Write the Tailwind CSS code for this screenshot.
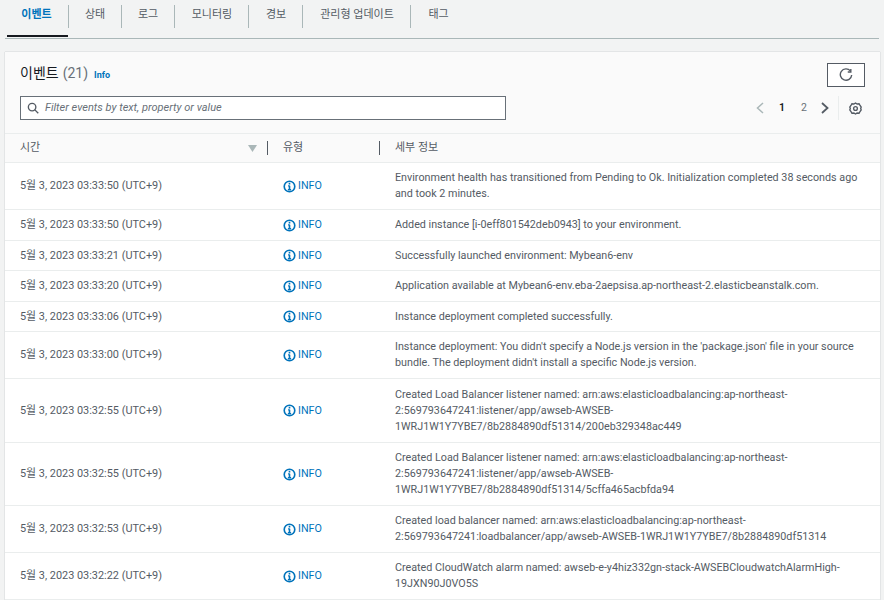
<!doctype html>
<html lang="ko">
<head>
<meta charset="utf-8">
<title>이벤트</title>
<script src="https://cdn.jsdelivr.net/npm/@tailwindcss/browser@4"></script>
</head>
<body class="h-[600px] w-[884px] overflow-hidden bg-[#f2f3f3] font-['Roboto','Noto_Sans_CJK_KR',sans-serif] text-[10.75px] leading-4 text-[#16191f]">
  <!-- Tabs -->
  <div class="mx-[5px] flex h-[39px] items-start border-b border-[#aab7b8] pt-[5px] text-[11px]">
    <div class="relative flex h-[23px] w-[63px] items-start justify-center pt-[2px] font-semibold text-[#0073bb]">
      이벤트
      <span class="absolute top-[30px] left-[2px] h-[2px] w-[61px] bg-[#16191f]"></span>
    </div>
    <div class="flex h-[23px] w-[53px] justify-center border-l border-[#aab7b8] pt-[2px] text-[#545b64]">상태</div>
    <div class="flex h-[23px] w-[53px] justify-center border-l border-[#aab7b8] pt-[2px] text-[#545b64]">로그</div>
    <div class="flex h-[23px] w-[74px] justify-center border-l border-[#aab7b8] pt-[2px] pl-px text-[#545b64]">모니터링</div>
    <div class="flex h-[23px] w-[54px] justify-center border-l border-[#aab7b8] pt-[2px] pl-px text-[#545b64]">경보</div>
    <div class="flex h-[23px] w-[108px] justify-center border-l border-[#aab7b8] pt-[2px] pl-px text-[#545b64]">관리형 업데이트</div>
    <div class="flex h-[23px] w-[56px] justify-center border-l border-[#aab7b8] pt-[2px] text-[#545b64]">태그</div>
  </div>

  <!-- Events card -->
  <div class="mt-[13px] ml-[5px] w-[875px] bg-white shadow-[0_0_1px_rgba(0,28,36,0.35)]">
    <div class="h-[82px] border-b border-[#eaeded] bg-[#fafafa] pt-[11px] pr-[15px] pl-[15px]">
      <div class="flex h-[24px] items-start justify-between">
        <div class="flex items-baseline">
          <span class="text-[14px] leading-5">이벤트</span>
          <span class="ml-[4px] text-[14px] leading-5 text-[#687078]">(21)</span>
          <span class="ml-[6px] text-[9px] font-bold text-[#0073bb]">Info</span>
        </div>
        <button class="flex h-[24px] w-[38px] items-center justify-center border border-[#545b64] bg-white">
          <svg class="h-[14px] w-[14px]" viewBox="0 0 16 16" fill="none" stroke="#545b64" stroke-width="1.6">
            <path d="M13 3.300A6.500 6.500 0 1 0 14.500 8"/>
            <path d="M13.500 1v3.500H10"/>
          </svg>
        </button>
      </div>
      <div class="mt-[9px] flex h-[24px] items-center justify-between">
        <div class="flex h-[24px] w-[486px] items-center border border-[#687078] bg-white pl-[6px]">
          <svg class="h-[12px] w-[12px] shrink-0" viewBox="0 0 16 16" fill="none" stroke="#545b64" stroke-width="1.8">
            <circle cx="6.800" cy="6.800" r="5"/>
            <path d="M10.500 10.500 15 15"/>
          </svg>
          <span class="ml-[6px] text-[11px] text-[#687078] italic">Filter events by text, property or value</span>
        </div>
        <div class="mr-[3px] flex h-[24px] items-center">
          <svg class="h-[12px] w-[8px]" viewBox="0 0 8 12" fill="none" stroke="#aab7b8" stroke-width="1.5"><path d="M7 1 1.500 6 7 11"/></svg>
          <span class="ml-[15px] w-[6px] text-[10.5px] font-semibold">1</span>
          <span class="ml-[16px] w-[8px] text-[10.5px] text-[#687078]">2</span>
          <svg class="ml-[12px] h-[12px] w-[8px]" viewBox="0 0 8 12" fill="none" stroke="#545b64" stroke-width="1.8"><path d="M1 1 6.500 6 1 11"/></svg>
          <span class="mr-[10px] ml-[9px] h-[24px] border-l border-[#eaeded]"></span>
          <svg class="h-[13px] w-[13px]" viewBox="0 0 16 16" fill="none" stroke="#545b64" stroke-width="1.7">
            <path d="M8 1.200 10 2.500l2.400-.3 1.200 2.100 1.400 1.900-.6 1.800.6 1.800-1.400 1.900-1.200 2.100-2.400-.3L8 14.800l-2-1.300-2.400.3-1.200-2.100L1 9.800l.6-1.800L1 6.200l1.400-1.900 1.200-2.100 2.400.3z"/>
            <circle cx="8" cy="8" r="2.300"/>
          </svg>
        </div>
      </div>
    </div>

    <!-- Column header -->
    <div class="grid h-[29px] grid-cols-[263px_112px_1fr] items-center border-b border-[#eaeded] bg-[#fafafa] text-[11px] text-[#545b64]">
      <div class="flex h-full items-center justify-between pl-[15px]">
        <span>시간</span>
        <span class="flex items-center">
          <svg class="h-[7px] w-[9px]" viewBox="0 0 9 7"><path d="M0 0h9L4.500 7z" fill="#aab7b8"/></svg>
          <span class="ml-[10px] h-[14px] border-l border-[#545b64]"></span>
        </span>
      </div>
      <div class="flex h-full items-center justify-between pl-[15px]">
        <span>유형</span>
        <span class="h-[14px] border-l border-[#545b64]"></span>
      </div>
      <div class="pl-[15px]">세부 정보</div>
    </div>

    <!-- Rows -->
    <div class="grid h-[47px] grid-cols-[263px_112px_1fr] items-center border-b border-[#eaeded]">
      <div class="pl-[15px] text-[10.9px] text-[#545b64]">5월 3, 2023 03:33:50 (UTC+9)</div>
      <div class="flex items-center pl-[15px] text-[#0073bb]"><svg class="mr-[2px] h-[13px] w-[13px]" viewBox="0 0 16 16" fill="none" stroke="#0073bb" stroke-width="2"><circle cx="8" cy="8" r="6.500"/><path d="M8 7v5M6 12h4M6.500 7.300H8M8 3.500v2"/></svg>INFO</div>
      <div class="pr-[15px] pl-[15px] text-[#545b64]">Environment health has transitioned from Pending to Ok. Initialization completed 38 seconds ago and took 2 minutes.</div>
    </div>
    <div class="grid h-[31px] grid-cols-[263px_112px_1fr] items-center border-b border-[#eaeded]">
      <div class="pl-[15px] text-[10.9px] text-[#545b64]">5월 3, 2023 03:33:50 (UTC+9)</div>
      <div class="flex items-center pl-[15px] text-[#0073bb]"><svg class="mr-[2px] h-[13px] w-[13px]" viewBox="0 0 16 16" fill="none" stroke="#0073bb" stroke-width="2"><circle cx="8" cy="8" r="6.500"/><path d="M8 7v5M6 12h4M6.500 7.300H8M8 3.500v2"/></svg>INFO</div>
      <div class="pr-[15px] pl-[15px] text-[#545b64]">Added instance [i-0eff801542deb0943] to your environment.</div>
    </div>
    <div class="grid h-[30px] grid-cols-[263px_112px_1fr] items-center border-b border-[#eaeded]">
      <div class="pl-[15px] text-[10.9px] text-[#545b64]">5월 3, 2023 03:33:21 (UTC+9)</div>
      <div class="flex items-center pl-[15px] text-[#0073bb]"><svg class="mr-[2px] h-[13px] w-[13px]" viewBox="0 0 16 16" fill="none" stroke="#0073bb" stroke-width="2"><circle cx="8" cy="8" r="6.500"/><path d="M8 7v5M6 12h4M6.500 7.300H8M8 3.500v2"/></svg>INFO</div>
      <div class="pr-[15px] pl-[15px] text-[#545b64]">Successfully launched environment: Mybean6-env</div>
    </div>
    <div class="grid h-[31px] grid-cols-[263px_112px_1fr] items-center border-b border-[#eaeded]">
      <div class="pl-[15px] text-[10.9px] text-[#545b64]">5월 3, 2023 03:33:20 (UTC+9)</div>
      <div class="flex items-center pl-[15px] text-[#0073bb]"><svg class="mr-[2px] h-[13px] w-[13px]" viewBox="0 0 16 16" fill="none" stroke="#0073bb" stroke-width="2"><circle cx="8" cy="8" r="6.500"/><path d="M8 7v5M6 12h4M6.500 7.300H8M8 3.500v2"/></svg>INFO</div>
      <div class="pr-[15px] pl-[15px] text-[#545b64]">Application available at Mybean6-env.eba-2aepsisa.ap-northeast-2.elasticbeanstalk.com.</div>
    </div>
    <div class="grid h-[30px] grid-cols-[263px_112px_1fr] items-center border-b border-[#eaeded]">
      <div class="pl-[15px] text-[10.9px] text-[#545b64]">5월 3, 2023 03:33:06 (UTC+9)</div>
      <div class="flex items-center pl-[15px] text-[#0073bb]"><svg class="mr-[2px] h-[13px] w-[13px]" viewBox="0 0 16 16" fill="none" stroke="#0073bb" stroke-width="2"><circle cx="8" cy="8" r="6.500"/><path d="M8 7v5M6 12h4M6.500 7.300H8M8 3.500v2"/></svg>INFO</div>
      <div class="pr-[15px] pl-[15px] text-[#545b64]">Instance deployment completed successfully.</div>
    </div>
    <div class="grid h-[47px] grid-cols-[263px_112px_1fr] items-center border-b border-[#eaeded]">
      <div class="pl-[15px] text-[10.9px] text-[#545b64]">5월 3, 2023 03:33:00 (UTC+9)</div>
      <div class="flex items-center pl-[15px] text-[#0073bb]"><svg class="mr-[2px] h-[13px] w-[13px]" viewBox="0 0 16 16" fill="none" stroke="#0073bb" stroke-width="2"><circle cx="8" cy="8" r="6.500"/><path d="M8 7v5M6 12h4M6.500 7.300H8M8 3.500v2"/></svg>INFO</div>
      <div class="pr-[15px] pl-[15px] text-[#545b64]">Instance deployment: You didn't specify a Node.js version in the 'package.json' file in your source bundle. The deployment didn't install a specific Node.js version.</div>
    </div>
    <div class="grid h-[64px] grid-cols-[263px_112px_1fr] items-center border-b border-[#eaeded]">
      <div class="pl-[15px] text-[10.9px] text-[#545b64]">5월 3, 2023 03:32:55 (UTC+9)</div>
      <div class="flex items-center pl-[15px] text-[#0073bb]"><svg class="mr-[2px] h-[13px] w-[13px]" viewBox="0 0 16 16" fill="none" stroke="#0073bb" stroke-width="2"><circle cx="8" cy="8" r="6.500"/><path d="M8 7v5M6 12h4M6.500 7.300H8M8 3.500v2"/></svg>INFO</div>
      <div class="pr-[15px] pl-[15px] text-[#545b64]">Created Load Balancer listener named: arn:aws:elasticloadbalancing:ap-northeast-<br>2:569793647241:listener/app/awseb-AWSEB-<br>1WRJ1W1Y7YBE7/8b2884890df51314/200eb329348ac449</div>
    </div>
    <div class="grid h-[63px] grid-cols-[263px_112px_1fr] items-center border-b border-[#eaeded]">
      <div class="pl-[15px] text-[10.9px] text-[#545b64]">5월 3, 2023 03:32:55 (UTC+9)</div>
      <div class="flex items-center pl-[15px] text-[#0073bb]"><svg class="mr-[2px] h-[13px] w-[13px]" viewBox="0 0 16 16" fill="none" stroke="#0073bb" stroke-width="2"><circle cx="8" cy="8" r="6.500"/><path d="M8 7v5M6 12h4M6.500 7.300H8M8 3.500v2"/></svg>INFO</div>
      <div class="pr-[15px] pl-[15px] text-[#545b64]">Created Load Balancer listener named: arn:aws:elasticloadbalancing:ap-northeast-<br>2:569793647241:listener/app/awseb-AWSEB-<br>1WRJ1W1Y7YBE7/8b2884890df51314/5cffa465acbfda94</div>
    </div>
    <div class="grid h-[47px] grid-cols-[263px_112px_1fr] items-center border-b border-[#eaeded]">
      <div class="pl-[15px] text-[10.9px] text-[#545b64]">5월 3, 2023 03:32:53 (UTC+9)</div>
      <div class="flex items-center pl-[15px] text-[#0073bb]"><svg class="mr-[2px] h-[13px] w-[13px]" viewBox="0 0 16 16" fill="none" stroke="#0073bb" stroke-width="2"><circle cx="8" cy="8" r="6.500"/><path d="M8 7v5M6 12h4M6.500 7.300H8M8 3.500v2"/></svg>INFO</div>
      <div class="pr-[15px] pl-[15px] text-[#545b64]">Created load balancer named: arn:aws:elasticloadbalancing:ap-northeast-<br>2:569793647241:loadbalancer/app/awseb-AWSEB-1WRJ1W1Y7YBE7/8b2884890df51314</div>
    </div>
    <div class="grid h-[47px] grid-cols-[263px_112px_1fr] items-center border-b border-[#eaeded]">
      <div class="pl-[15px] text-[10.9px] text-[#545b64]">5월 3, 2023 03:32:22 (UTC+9)</div>
      <div class="flex items-center pl-[15px] text-[#0073bb]"><svg class="mr-[2px] h-[13px] w-[13px]" viewBox="0 0 16 16" fill="none" stroke="#0073bb" stroke-width="2"><circle cx="8" cy="8" r="6.500"/><path d="M8 7v5M6 12h4M6.500 7.300H8M8 3.500v2"/></svg>INFO</div>
      <div class="pr-[15px] pl-[15px] text-[#545b64]">Created CloudWatch alarm named: awseb-e-y4hiz332gn-stack-AWSEBCloudwatchAlarmHigh-<br>19JXN90J0VO5S</div>
    </div>
  </div>
</body>
</html>
